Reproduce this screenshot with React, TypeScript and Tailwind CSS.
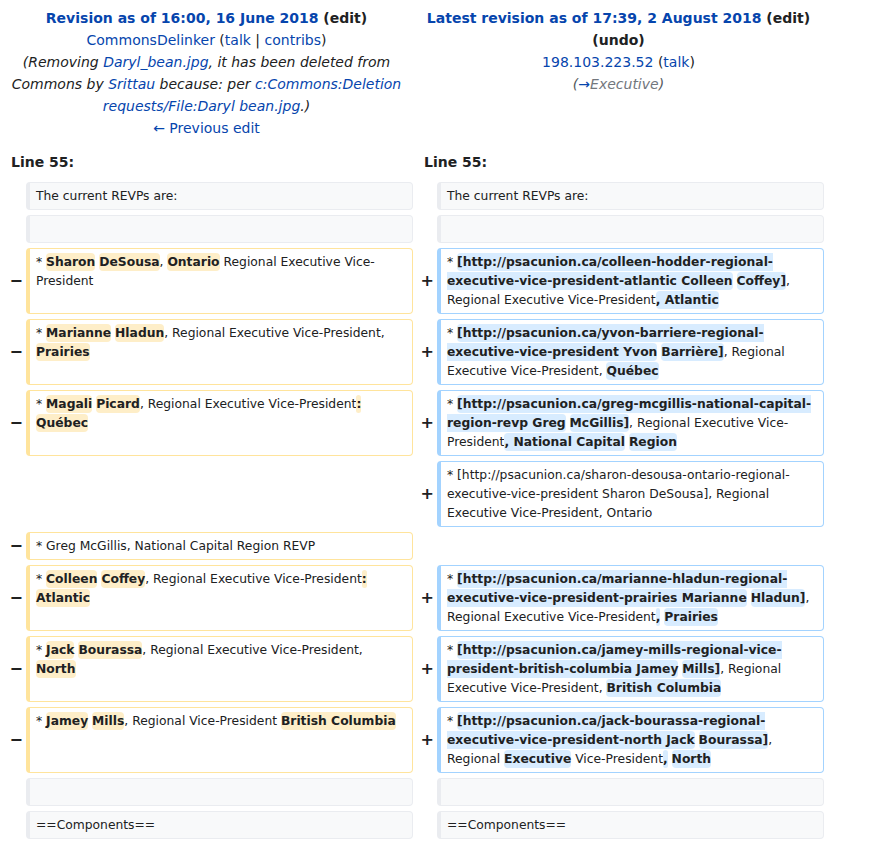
import React from "react";

type Seg = string | [string];
type Kind = "ctx" | "del" | "add" | "none";
type Side = { kind: Kind; segs: Seg[] };

const ctx = (...segs: Seg[]): Side => ({ kind: "ctx", segs });
const del = (...segs: Seg[]): Side => ({ kind: "del", segs });
const add = (...segs: Seg[]): Side => ({ kind: "add", segs });
const none: Side = { kind: "none", segs: [] };

const rows: [Side, Side][] = [
  [ctx("The current REVPs are:"), ctx("The current REVPs are:")],
  [ctx(""), ctx("")],
  [
    del("* ", ["Sharon"], " ", ["DeSousa"], ", ", ["Ontario"], " Regional Executive Vice-President"),
    add(
      "* ",
      ["[http://psacunion.ca/colleen-hodder-regional-executive-vice-president-atlantic Colleen"],
      " ",
      ["Coffey]"],
      ", Regional Executive Vice-President",
      [", Atlantic"]
    ),
  ],
  [
    del("* ", ["Marianne"], " ", ["Hladun"], ", Regional Executive Vice-President, ", ["Prairies"]),
    add(
      "* ",
      ["[http://psacunion.ca/yvon-barriere-regional-executive-vice-president Yvon"],
      " ",
      ["Barrière]"],
      ", Regional Executive Vice-President, ",
      ["Québec"]
    ),
  ],
  [
    del("* ", ["Magali"], " ", ["Picard"], ", Regional Executive Vice-President", [":"], " ", ["Québec"]),
    add(
      "* ",
      ["[http://psacunion.ca/greg-mcgillis-national-capital-region-revp Greg"],
      " ",
      ["McGillis]"],
      ", Regional Executive Vice-President",
      [", National Capital"],
      " ",
      ["Region"]
    ),
  ],
  [
    none,
    add(
      "* [http://psacunion.ca/sharon-desousa-ontario-regional-executive-vice-president Sharon DeSousa], Regional Executive Vice-President, Ontario"
    ),
  ],
  [del("* Greg McGillis, National Capital Region REVP"), none],
  [
    del("* ", ["Colleen"], " ", ["Coffey"], ", Regional Executive Vice-President", [":"], " ", ["Atlantic"]),
    add(
      "* ",
      ["[http://psacunion.ca/marianne-hladun-regional-executive-vice-president-prairies Marianne"],
      " ",
      ["Hladun]"],
      ", Regional Executive Vice-President",
      [","],
      " ",
      ["Prairies"]
    ),
  ],
  [
    del("* ", ["Jack"], " ", ["Bourassa"], ", Regional Executive Vice-President, ", ["North"]),
    add(
      "* ",
      ["[http://psacunion.ca/jamey-mills-regional-vice-president-british-columbia Jamey"],
      " ",
      ["Mills]"],
      ", Regional Executive Vice-President, ",
      ["British Columbia"]
    ),
  ],
  [
    del("* ", ["Jamey"], " ", ["Mills"], ", Regional Vice-President ", ["British Columbia"]),
    add(
      "* ",
      ["[http://psacunion.ca/jack-bourassa-regional-executive-vice-president-north Jack"],
      " ",
      ["Bourassa]"],
      ", Regional ",
      ["Executive"],
      " Vice-President",
      [","],
      " ",
      ["North"]
    ),
  ],
  [ctx(""), ctx("")],
  [ctx("==Components=="), ctx("==Components==")],
];

function Marker({ kind }: { kind: Kind }) {
  return (
    <div className="flex items-center justify-end pr-[3px] text-[16px] font-bold text-[#202122]">
      {kind === "del" ? "−" : kind === "add" ? "+" : ""}
    </div>
  );
}

function Cell({ side }: { side: Side }) {
  if (side.kind === "none") return <div />;
  const box =
    side.kind === "ctx"
      ? "bg-[#f8f9fa] border-[#eaecf0]"
      : side.kind === "del"
      ? "bg-white border-[#ffe49c]"
      : "bg-white border-[#a3d3ff]";
  const mark = side.kind === "del" ? "bg-[#feeec8]" : "bg-[#d8ecff]";
  return (
    <div
      className={`min-h-[28px] rounded-[4px] border border-l-4 px-[6px] py-[3.5px] text-[12.32px] leading-[19px] text-[#202122] ${box}`}
    >
      {side.segs.map((s, i) =>
        typeof s === "string" ? (
          <span key={i}>{s}</span>
        ) : (
          <span key={i} className={`rounded-[4px] py-[2px] font-bold ${mark}`}>
            {s[0]}
          </span>
        )
      )}
    </div>
  );
}

const link = "text-[#0645ad]";

export default function App() {
  return (
    <div className="w-[824px] bg-white font-['DejaVu_Sans',sans-serif] text-[#202122]">
      {/* revision headers */}
      <div className="grid grid-cols-[413px_411px] pt-[7px] text-center text-[14px] leading-[22px]">
        <div className="px-[4px]">
          <div className="font-bold">
            <span className={link}>Revision as of 16:00, 16 June 2018</span> (edit)
          </div>
          <div>
            <span className={link}>CommonsDelinker</span> (<span className={link}>talk</span> |{" "}
            <span className={link}>contribs</span>)
          </div>
          <div className="italic">
            (Removing <span className={link}>Daryl_bean.jpg</span>, it has been deleted from Commons by{" "}
            <span className={link}>Srittau</span> because: per{" "}
            <span className={link}>c:Commons:Deletion requests/File:Daryl bean.jpg</span>.)
          </div>
          <div className={link}>← Previous edit</div>
        </div>
        <div className="px-[4px]">
          <div className="font-bold">
            <span className={link}>Latest revision as of 17:39, 2 August 2018</span> (edit) (undo)
          </div>
          <div>
            <span className={link}>198.103.223.52</span> (<span className={link}>talk</span>)
          </div>
          <div className="italic text-[#54595d]">
            (<span className={link}>→</span>
            <span className="text-[#72777d]">Executive</span>)
          </div>
        </div>
      </div>

      {/* line numbers */}
      <div className="mt-[12px] grid grid-cols-[413px_411px] text-[14px] font-bold leading-[22px]">
        <div className="pl-[11px]">Line 55:</div>
        <div className="pl-[11px]">Line 55:</div>
      </div>

      {/* diff body */}
      <div className="mt-[9px] grid grid-cols-[26px_387px_24px_387px] gap-y-[5px]">
        {rows.map(([l, r], i) => (
          <React.Fragment key={i}>
            <Marker kind={l.kind} />
            <Cell side={l} />
            <Marker kind={r.kind} />
            <Cell side={r} />
          </React.Fragment>
        ))}
      </div>
    </div>
  );
}
